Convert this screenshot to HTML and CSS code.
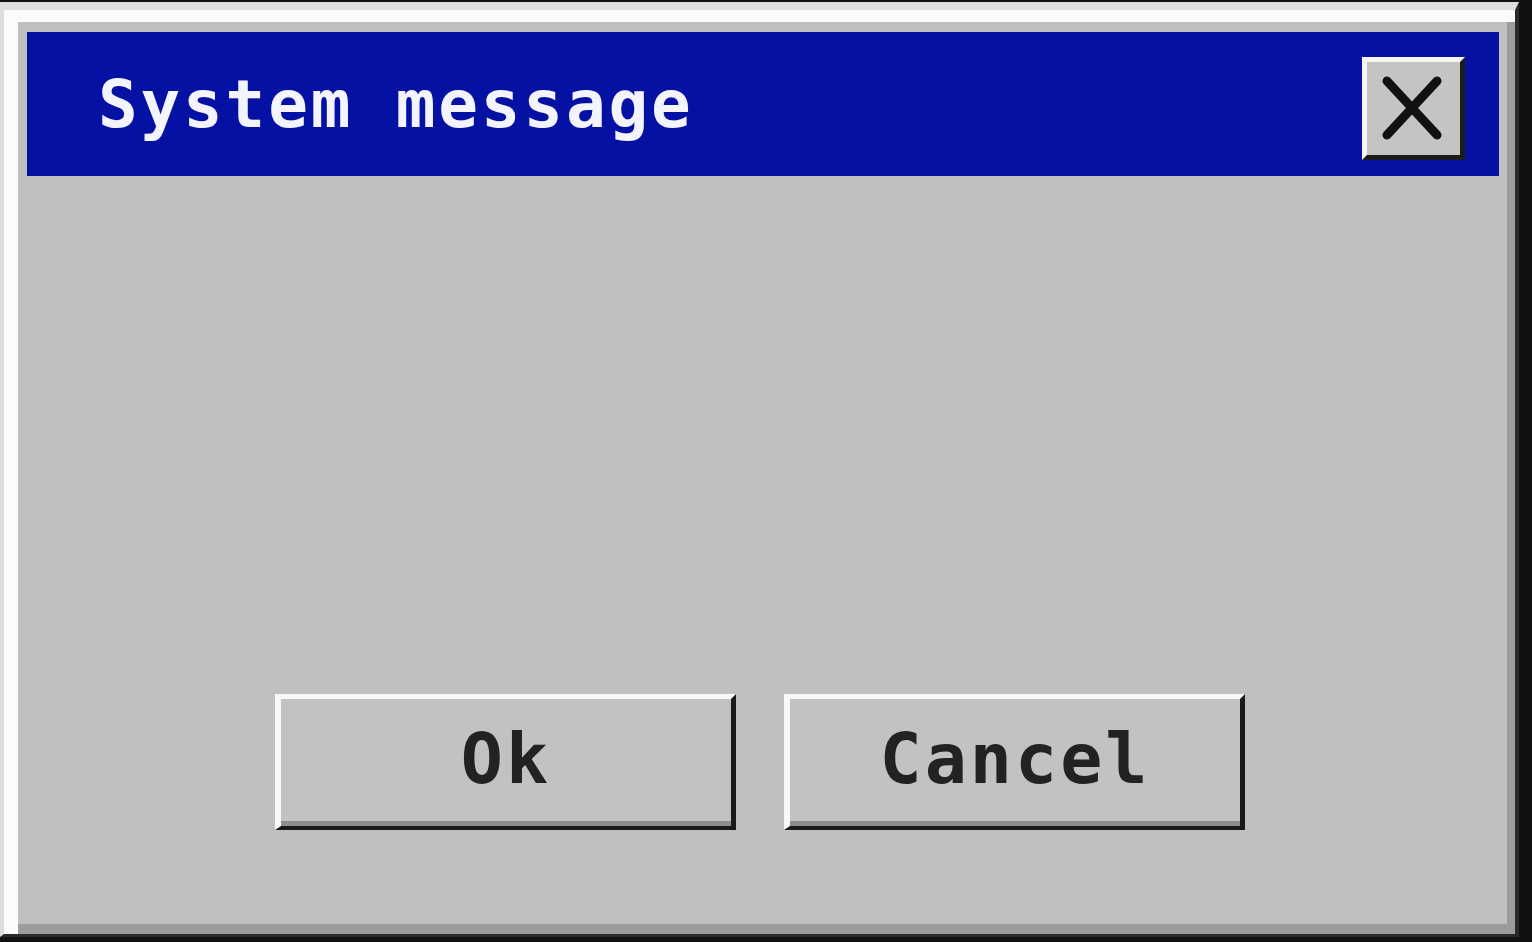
FILE: index.html
```html
<!DOCTYPE html>
<html lang="en">
<head>
<meta charset="utf-8">
<title>System message</title>
<link rel="stylesheet" href="styles.css">
</head>
<body>
<div class="window">
  <div class="titlebar">
    <span class="title">System message</span>
    <button class="close" aria-label="Close">
      <svg width="93" height="93" viewBox="0 0 93 93">
        <path d="M20 19 L70 73 M70 19 L20 73" stroke="#111" stroke-width="9" stroke-linecap="round" fill="none"/>
      </svg>
    </button>
  </div>
  <div class="body">
    <div class="buttons">
      <button class="btn">Ok</button>
      <button class="btn">Cancel</button>
    </div>
  </div>
</div>
</body>
</html>
```

FILE: styles.css
```css
html, body {
  margin: 0;
  padding: 0;
}
body {
  background: #111;
  width: 1532px;
  height: 942px;
  overflow: hidden;
  padding-top: 2px;
  box-sizing: border-box;
}
.window {
  width: 1519px;
  height: 935px;
  box-sizing: border-box;
  background: #c0c0c0;
  border-left: 4px solid #dedede;
  border-top: 8px solid #dedede;
  border-right: 4px solid #2a2a2a;
  border-bottom: 3px solid #2a2a2a;
  box-shadow: inset 14px 12px 0 0 #fbfbfb, inset -8px -10px 0 0 #9c9c9c;
  padding: 22px 16px 10px 23px;
  display: flex;
  flex-direction: column;
}
.titlebar {
  height: 144px;
  flex: none;
  background: #0411a3;
  display: flex;
  align-items: flex-start;
  justify-content: space-between;
  padding: 0 34px 0 71px;
  box-sizing: border-box;
}
.title {
  font-family: "DejaVu Sans Mono", "Liberation Mono", monospace;
  font-weight: bold;
  font-size: 66px;
  letter-spacing: 2.8px;
  line-height: 1;
  color: #f4f4ff;
  margin-top: 40px;
}
.close {
  margin-top: 25px;
  width: 103px;
  height: 103px;
  padding: 0;
  box-sizing: border-box;
  background: #c4c4c4;
  border-style: solid;
  border-width: 5px;
  border-color: #f6f6f6 #1c1c1c #1c1c1c #f6f6f6;
  display: flex;
  align-items: center;
  justify-content: center;
}
.close svg {
  display: block;
}
.body {
  flex: 1;
  display: flex;
  align-items: flex-end;
  justify-content: center;
  padding-bottom: 94px;
  padding-right: 6px;
}
.buttons {
  display: flex;
  gap: 48px;
}
.btn {
  width: 461px;
  height: 136px;
  box-sizing: border-box;
  background: #c2c2c2;
  border-style: solid;
  border-width: 5px 5px 4px 6px;
  border-color: #f8f8f8 #1a1a1a #1a1a1a #f8f8f8;
  box-shadow: inset 0 -5px 0 0 #8e8e8e;
  padding: 0 0 8px 0;
  font-family: "DejaVu Sans Mono", "Liberation Mono", monospace;
  font-weight: bold;
  font-size: 70px;
  letter-spacing: 3px;
  line-height: 1;
  color: #222;
}
```
